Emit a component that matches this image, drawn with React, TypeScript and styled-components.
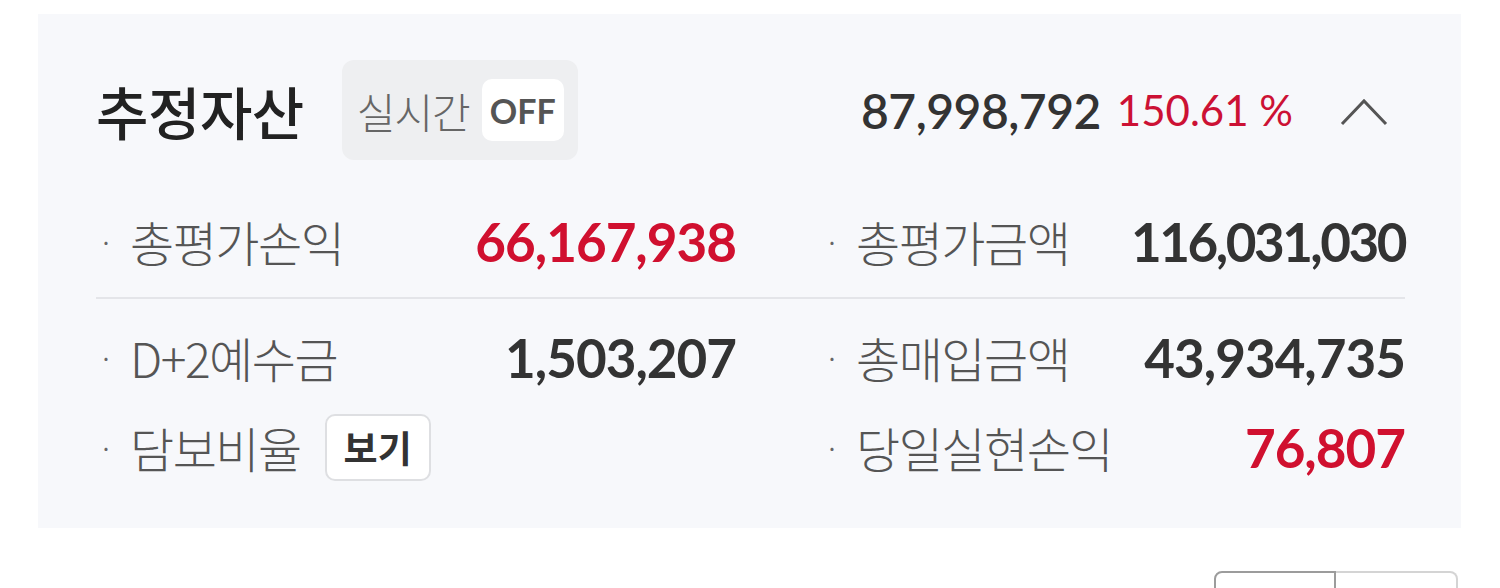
import React from 'react'
import styled, { createGlobalStyle } from 'styled-components'

const GlobalStyle = createGlobalStyle`
  html, body {
    margin: 0;
    padding: 0;
    background: #ffffff;
  }
  body {
    font-family: 'Noto Sans CJK KR', 'Noto Sans', sans-serif;
    color: #333;
  }
`

const Page = styled.div`
  padding: 14px 39px 0 38px;
  height: 588px;
  box-sizing: border-box;
  overflow: hidden;
`

const Panel = styled.section`
  background: #f7f8fb;
  padding: 46px 56px 45px 58px;
`

const Header = styled.div`
  display: flex;
  align-items: center;
  height: 100px;
`

const Title = styled.h2`
  margin: 0;
  font-size: 57px;
  font-weight: 500;
  letter-spacing: -0.5px;
  color: #222;
`

const Toggle = styled.div`
  display: flex;
  align-items: center;
  margin-left: 38px;
  height: 100px;
  padding: 0 14px 0 15px;
  box-sizing: border-box;
  background: #eeeff1;
  border-radius: 12px;
`

const ToggleLabel = styled.span`
  font-size: 42px;
  font-weight: 300;
  color: #666;
  letter-spacing: -1px;
  margin-right: 12px;
`

const ToggleState = styled.span`
  display: flex;
  align-items: center;
  justify-content: center;
  width: 82px;
  height: 62px;
  background: #ffffff;
  border-radius: 10px;
  font-family: 'Lato', 'Noto Sans', sans-serif;
  font-size: 34px;
  font-weight: 700;
  color: #555;
`

const Summary = styled.div`
  margin-left: auto;
  display: flex;
  align-items: center;
`

const Total = styled.span`
  font-family: 'Lato', 'Noto Sans', sans-serif;
  font-size: 48px;
  font-weight: 600;
  color: #333;
  letter-spacing: -0.5px;
`

const Rate = styled.span`
  font-family: 'Lato', 'Noto Sans', sans-serif;
  font-size: 42px;
  font-weight: 400;
  color: #cc1134;
  margin-left: 16px;
`

const Chevron = styled.svg`
  margin-left: 46px;
  margin-right: 16px;
`

const Grid = styled.div`
  display: grid;
  grid-template-columns: 640px 1fr;
  column-gap: 86px;
  margin-top: 45px;
`

const Divider = styled.div`
  grid-column: 1 / -1;
  height: 2px;
  background: #e4e5e9;
  margin: 20px 0 22px;
`

const Row = styled.div<{ $gap?: number }>`
  display: flex;
  align-items: center;
  height: 72px;
  margin-top: ${({ $gap }) => $gap ?? 0}px;
`

const Label = styled.span`
  display: flex;
  align-items: center;
  font-size: 48px;
  font-weight: 300;
  color: #555;
  letter-spacing: -1.5px;

  &::before {
    content: '·';
    width: 32px;
    font-size: 30px;
    color: #666;
    padding-left: 2px;
  }
`

const Value = styled.span<{ $red?: boolean; $tight?: boolean }>`
  margin-left: auto;
  font-family: 'Lato', 'Noto Sans', sans-serif;
  font-size: 53px;
  font-weight: 700;
  letter-spacing: ${({ $tight }) => ($tight ? '-2.5px' : '-1px')};
  color: ${({ $red }) => ($red ? '#d0102f' : '#333')};
`

const ViewButton = styled.button`
  margin-left: 24px;
  width: 106px;
  height: 67px;
  background: #ffffff;
  border: 2px solid #dedfe2;
  border-radius: 10px;
  font-family: 'Noto Sans CJK KR', sans-serif;
  font-size: 37px;
  font-weight: 700;
  color: #333;
  padding: 0;
`

const Segments = styled.div`
  display: flex;
  justify-content: flex-end;
  margin-top: 43px;
  padding-right: 3px;
`

const Segment = styled.div<{ $active?: boolean }>`
  width: 122px;
  height: 60px;
  box-sizing: border-box;
  border: 2px solid ${({ $active }) => ($active ? '#9c9c9c' : '#d4d4d4')};
  background: #fff;
  &:first-child {
    border-radius: 8px 0 0 0;
  }
  &:last-child {
    border-left: none;
    border-radius: 0 8px 0 0;
  }
`

export default function App() {
  return (
    <Page>
      <GlobalStyle />
      <Panel>
        <Header>
          <Title>추정자산</Title>
          <Toggle>
            <ToggleLabel>실시간</ToggleLabel>
            <ToggleState>OFF</ToggleState>
          </Toggle>
          <Summary>
            <Total>87,998,792</Total>
            <Rate>150.61 %</Rate>
            <Chevron width="50" height="34" viewBox="0 0 50 34">
              <polyline points="3,31 25,8 47,31" fill="none" stroke="#555" strokeWidth="3" />
            </Chevron>
          </Summary>
        </Header>
        <Grid>
          <Row>
            <Label>총평가손익</Label>
            <Value $red>66,167,938</Value>
          </Row>
          <Row>
            <Label>총평가금액</Label>
            <Value $tight>116,031,030</Value>
          </Row>
          <Divider />
          <Row>
            <Label>D+2예수금</Label>
            <Value>1,503,207</Value>
          </Row>
          <Row>
            <Label>총매입금액</Label>
            <Value>43,934,735</Value>
          </Row>
          <Row $gap={18}>
            <Label>담보비율</Label>
            <ViewButton>보기</ViewButton>
          </Row>
          <Row $gap={18}>
            <Label>당일실현손익</Label>
            <Value $red>76,807</Value>
          </Row>
        </Grid>
      </Panel>
      <Segments>
        <Segment $active />
        <Segment />
      </Segments>
    </Page>
  )
}
